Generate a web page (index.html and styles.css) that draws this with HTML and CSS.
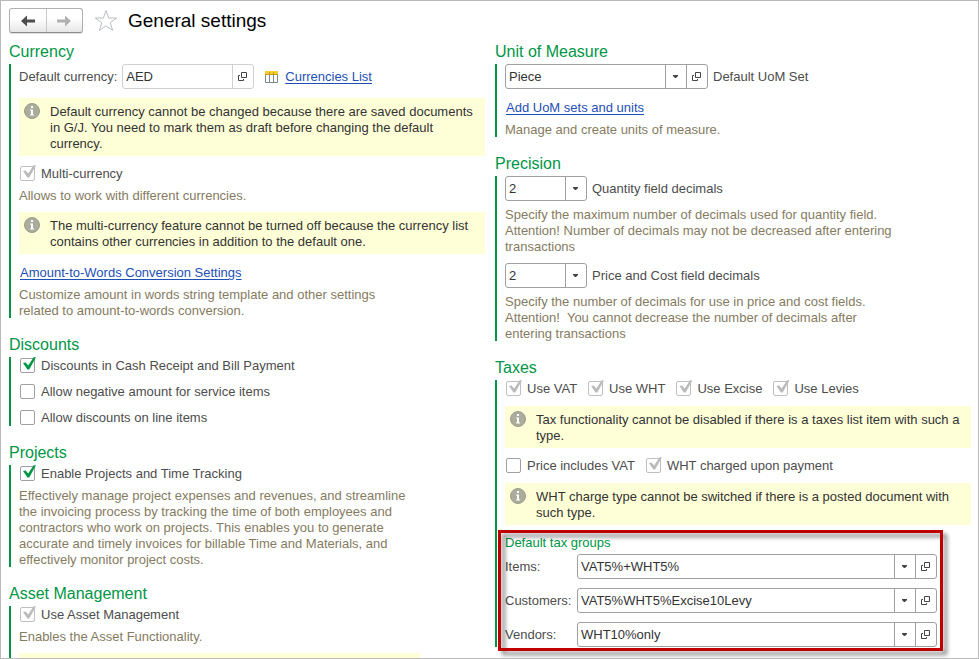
FILE: index.html
```html
<!DOCTYPE html>
<html lang="en">
<head>
  <meta charset="UTF-8">
  <meta name="viewport" content="width=device-width, initial-scale=1.0">
  <title>General settings</title>
  <link rel="stylesheet" href="styles.css">
</head>
<body>

  <!-- Shared icons -->
  <svg class="sprite" aria-hidden="true">
    <symbol id="open" viewBox="0 0 10 10">
      <path d="M3.500 .5H8.500V5.500H3.500ZM2 3.500H.5V8.500H5.500V7" fill="none" stroke="#444"/>
    </symbol>
    <symbol id="arrow" viewBox="0 0 5 3">
      <path d="M0 0H5V1L3 3H2L0 1Z" fill="#444"/>
    </symbol>
    <symbol id="info" viewBox="0 0 16 16">
      <circle cx="8" cy="8" r="7.500" fill="#acac9c" stroke="#9c9c8e"/>
      <path d="M7 3H9V5H7ZM6 6.500H9V11.500H10V12.500H6V11.500H7V7.500H6Z" fill="#fff"/>
    </symbol>
  </svg>

  <div class="window">
    <header class="header">
      <div class="nav">
        <button type="button" aria-label="Back">
          <svg width="14" height="12" viewBox="0 0 14 12"><path d="M0 6L6 .5V4.500H14V7.500H6V11.500Z" fill="#4d4d4d"/></svg>
        </button>
        <button type="button" aria-label="Forward">
          <svg width="14" height="12" viewBox="0 0 14 12"><path d="M14 6L8 .5V4.500H0V7.500H8V11.500Z" fill="#b0b0b0"/></svg>
        </button>
      </div>
      <button type="button" class="star" aria-label="Add to favorites">
        <svg width="24" height="24" viewBox="0 0 24 24"><path d="M12 1.500L14.600 9H22.700L16.200 13.800L18.700 21.500L12 16.800L5.300 21.500L7.800 13.800L1.300 9H9.400Z" fill="#fff" stroke="#b9bcc4"/></svg>
      </button>
      <h1>General settings</h1>
    </header>

    <main class="columns">
      <div class="column">

        <!-- Currency -->
        <section>
          <h2>Currency</h2>
          <div class="group">
            <div class="row">
              <label for="currency">Default currency:</label>
              <div class="field field-currency locked">
                <input type="text" id="currency" value="AED" readonly>
                <button type="button" aria-label="Open currency"><svg width="10" height="10"><use href="#open"/></svg></button>
              </div>
              <a href="#" class="icon-link">
                <svg width="13" height="12" viewBox="0 0 13 12">
                  <path d="M.5 .5H12.500V11.500H.5Z" fill="#fff" stroke="#7d8894"/>
                  <path d="M4.500 3V11M8.500 3V11" stroke="#7d8894"/>
                  <path d="M0 0H13V3H0Z" fill="#f5cf2f"/>
                  <path d="M0 3.500H13" stroke="#c79a1c"/>
                  <path d="M4.500 1V3M8.500 1V3" stroke="#c79a1c"/>
                </svg>
                <span>Currencies List</span>
              </a>
            </div>
            <div class="note">
              <svg width="16" height="16"><use href="#info"/></svg>
              <p>Default currency cannot be changed because there are saved documents<br>in G/J. You need to mark them as draft before changing the default<br>currency.</p>
            </div>
            <div class="checks">
              <label class="check"><input type="checkbox" checked disabled>Multi-currency</label>
            </div>
            <p class="help">Allows to work with different currencies.</p>
            <div class="note">
              <svg width="16" height="16"><use href="#info"/></svg>
              <p>The multi-currency feature cannot be turned off because the currency list<br>contains other currencies in addition to the default one.</p>
            </div>
            <a href="#" class="link">Amount-to-Words Conversion Settings</a>
            <p class="help">Customize amount in words string template and other settings<br>related to amount-to-words conversion.</p>
          </div>
        </section>

        <!-- Discounts -->
        <section>
          <h2>Discounts</h2>
          <div class="group">
            <div class="checks">
              <label class="check"><input type="checkbox" checked>Discounts in Cash Receipt and Bill Payment</label>
            </div>
            <div class="checks">
              <label class="check"><input type="checkbox">Allow negative amount for service items</label>
            </div>
            <div class="checks">
              <label class="check"><input type="checkbox">Allow discounts on line items</label>
            </div>
          </div>
        </section>

        <!-- Projects -->
        <section>
          <h2>Projects</h2>
          <div class="group">
            <div class="checks">
              <label class="check"><input type="checkbox" checked>Enable Projects and Time Tracking</label>
            </div>
            <p class="help">Effectively manage project expenses and revenues, and streamline<br>the invoicing process by tracking the time of both employees and<br>contractors who work on projects. This enables you to generate<br>accurate and timely invoices for billable Time and Materials, and<br>effectively monitor project costs.</p>
          </div>
        </section>

        <!-- Asset Management -->
        <section>
          <h2>Asset Management</h2>
          <div class="group">
            <div class="checks">
              <label class="check"><input type="checkbox" checked disabled>Use Asset Management</label>
            </div>
            <p class="help">Enables the Asset Functionality.</p>
            <div class="note note-short"></div>
          </div>
        </section>
      </div>

      <div class="column">

        <!-- Unit of Measure -->
        <section>
          <h2>Unit of Measure</h2>
          <div class="group">
            <div class="row">
              <div class="field field-uom">
                <div class="select">
                  <select id="uom"><option>Piece</option></select>
                  <span class="drop"><svg width="5" height="3"><use href="#arrow"/></svg></span>
                </div>
                <button type="button" aria-label="Open UoM set"><svg width="10" height="10"><use href="#open"/></svg></button>
              </div>
              <label for="uom">Default UoM Set</label>
            </div>
            <a href="#" class="link">Add UoM sets and units</a>
            <p class="help">Manage and create units of measure.</p>
          </div>
        </section>

        <!-- Precision -->
        <section>
          <h2>Precision</h2>
          <div class="group">
            <div class="row">
              <div class="field field-number">
                <div class="select">
                  <select id="quantity"><option>2</option></select>
                  <span class="drop"><svg width="5" height="3"><use href="#arrow"/></svg></span>
                </div>
              </div>
              <label for="quantity">Quantity field decimals</label>
            </div>
            <p class="help">Specify the maximum number of decimals used for quantity field.<br>Attention! Number of decimals may not be decreased after entering<br>transactions</p>
            <div class="row">
              <div class="field field-number">
                <div class="select">
                  <select id="price"><option>2</option></select>
                  <span class="drop"><svg width="5" height="3"><use href="#arrow"/></svg></span>
                </div>
              </div>
              <label for="price">Price and Cost field decimals</label>
            </div>
            <p class="help">Specify the number of decimals for use in price and cost fields.<br>Attention!&nbsp; You cannot decrease the number of decimals after<br>entering transactions</p>
          </div>
        </section>

        <!-- Taxes -->
        <section>
          <h2>Taxes</h2>
          <div class="group">
            <div class="checks">
              <label class="check"><input type="checkbox" checked disabled>Use VAT</label>
              <label class="check"><input type="checkbox" checked disabled>Use WHT</label>
              <label class="check"><input type="checkbox" checked disabled>Use Excise</label>
              <label class="check"><input type="checkbox" checked disabled>Use Levies</label>
            </div>
            <div class="note">
              <svg width="16" height="16"><use href="#info"/></svg>
              <p>Tax functionality cannot be disabled if there is a taxes list item with such a<br>type.</p>
            </div>
            <div class="checks">
              <label class="check"><input type="checkbox">Price includes VAT</label>
              <label class="check"><input type="checkbox" checked disabled>WHT charged upon payment</label>
            </div>
            <div class="note">
              <svg width="16" height="16"><use href="#info"/></svg>
              <p>WHT charge type cannot be switched if there is a posted document with<br>such type.</p>
            </div>

            <div class="tax-groups">
              <h3>Default tax groups</h3>
              <div class="tax-row">
                <label for="items">Items:</label>
                <div class="field">
                  <div class="select">
                    <select id="items"><option>VAT5%+WHT5%</option></select>
                    <span class="drop"><svg width="5" height="3"><use href="#arrow"/></svg></span>
                  </div>
                  <button type="button" aria-label="Open items tax group"><svg width="10" height="10"><use href="#open"/></svg></button>
                </div>
              </div>
              <div class="tax-row">
                <label for="customers">Customers:</label>
                <div class="field">
                  <div class="select">
                    <select id="customers"><option>VAT5%WHT5%Excise10Levy</option></select>
                    <span class="drop"><svg width="5" height="3"><use href="#arrow"/></svg></span>
                  </div>
                  <button type="button" aria-label="Open customers tax group"><svg width="10" height="10"><use href="#open"/></svg></button>
                </div>
              </div>
              <div class="tax-row">
                <label for="vendors">Vendors:</label>
                <div class="field">
                  <div class="select">
                    <select id="vendors"><option>WHT10%only</option></select>
                    <span class="drop"><svg width="5" height="3"><use href="#arrow"/></svg></span>
                  </div>
                  <button type="button" aria-label="Open vendors tax group"><svg width="10" height="10"><use href="#open"/></svg></button>
                </div>
              </div>
            </div>
          </div>
        </section>
      </div>
    </main>
  </div>

</body>
</html>
```
FILE: styles.css
```css
* {
  box-sizing: border-box;
}

body {
  margin: 0;
  font-family: "Liberation Sans", Arial, sans-serif;
  font-size: 13px;
  line-height: 16px;
  color: #4d4d4d;
  background: #fff;
}

.sprite {
  position: absolute;
  width: 0;
  height: 0;
}

.window {
  height: 100vh;
  overflow: hidden;
  border: 1px solid #b9b9b9;
  padding: 7px 7px 0 8px;
}

h1, h2, h3, p {
  margin: 0;
  font-weight: normal;
}

button, input, select {
  font: inherit;
  color: #333;
  margin: 0;
}

svg {
  display: block;
  flex: none;
}

/* Header */
.header {
  display: flex;
  align-items: center;
  height: 25px;
  margin-bottom: 8px;
}

.header h1 {
  font-size: 19px;
  line-height: 24px;
  color: #000;
}

.nav {
  display: flex;
  width: 74px;
  height: 25px;
  border: 1px solid #b0b0b0;
  border-bottom-color: #8c8c8c;
  border-radius: 3px;
  background: linear-gradient(#fff 40%, #e6e6e6);
  box-shadow: 0 1px 1px #ddd;
}

.nav button {
  flex: 1;
  display: flex;
  align-items: center;
  justify-content: center;
  padding: 0;
  border: 0;
  background: none;
}

.nav button + button {
  border-left: 1px solid #c8c8c8;
}

.star {
  margin: 0 10px 0 11px;
  padding: 0;
  border: 0;
  background: none;
}

/* Columns and sections */
.columns {
  display: grid;
  grid-template-columns: 1fr 1fr;
  gap: 10px;
}

.column {
  display: flex;
  flex-direction: column;
  gap: 16px;
  min-width: 0;
}

h2 {
  margin-bottom: 1px;
  font-size: 16px;
  line-height: 22px;
  color: #009646;
}

.group {
  display: flex;
  flex-direction: column;
  gap: 9px;
  border-left: 2px solid #009646;
  padding-left: 8px;
}

.help {
  margin-top: -3px;
  margin-bottom: -1px;
  color: #857b5f;
  white-space: nowrap;
}

a {
  color: #1d50b5;
  text-underline-offset: 2px;
}

.link {
  align-self: flex-start;
  margin-left: 1px;
  margin-bottom: -2px;
  line-height: 20px;
}

.icon-link {
  display: flex;
  align-items: center;
  gap: 7px;
  margin-left: 6px;
}

.note {
  display: flex;
  gap: 10px;
  min-height: 26px;
  padding: 5px 5px 4px;
  background: #ffffd7;
  color: #333;
  white-space: nowrap;
}

.note p {
  padding-top: 1px;
}

.note-short {
  margin-right: 65px;
}

/* Fields */
.row {
  display: flex;
  align-items: center;
  gap: 5px;
}

.field {
  display: flex;
  height: 25px;
  border: 1px solid #a0a0a0;
  border-radius: 3px;
  background: #fff;
}

.field input,
.field select {
  flex: 1;
  width: 100%;
  min-width: 0;
  padding: 0 3px;
  border: 0;
  background: none;
  appearance: none;
}

.field button {
  display: flex;
  align-items: center;
  justify-content: center;
  width: 21px;
  padding: 0;
  border: 0;
  border-left: 1px solid #a0a0a0;
  background: none;
}

.select {
  position: relative;
  display: flex;
  flex: 1;
}

.drop {
  position: absolute;
  top: 0;
  right: 0;
  bottom: 0;
  display: flex;
  align-items: center;
  justify-content: center;
  width: 21px;
  padding-right: 1px;
  border-left: 1px solid #a0a0a0;
  pointer-events: none;
}

.locked,
.locked button {
  border-color: #d0d0d0;
}

.field-currency {
  width: 132px;
}

.field-uom {
  width: 203px;
}

.field-number {
  width: 82px;
}

/* Checkboxes */
.checks {
  display: flex;
  gap: 11px;
  padding-left: 1px;
}

.check {
  display: flex;
  align-items: center;
  gap: 6px;
  height: 17px;
}

.check input {
  position: relative;
  width: 15px;
  height: 15px;
  border: 1px solid #a0a0a0;
  border-radius: 2px;
  background: #fff;
  appearance: none;
}

.check input:checked::before {
  content: "";
  position: absolute;
  top: -2px;
  left: 2px;
  width: 13px;
  height: 13px;
  background: #009646;
  clip-path: polygon(0 46%, 20% 42%, 40% 66%, 82% 2%, 100% 2%, 48% 96%, 34% 96%);
}

.check input:disabled {
  border-color: #c0c0c0;
}

.check input:disabled::before {
  background: #bbb;
}

/* Default tax groups */
.tax-groups {
  position: relative;
  display: flex;
  flex-direction: column;
  gap: 9px;
  max-width: 432px;
}

.tax-groups::after {
  content: "";
  position: absolute;
  inset: -4px -6px -4px -7px;
  border: 3px solid #c00000;
  filter: drop-shadow(4px 4px 2px rgba(0, 0, 0, 0.5));
  pointer-events: none;
}

.tax-groups h3 {
  margin-bottom: -7px;
  font-size: 13px;
  line-height: 18px;
  color: #009646;
}

.tax-row {
  display: grid;
  grid-template-columns: 72px 1fr;
  align-items: center;
}
```
